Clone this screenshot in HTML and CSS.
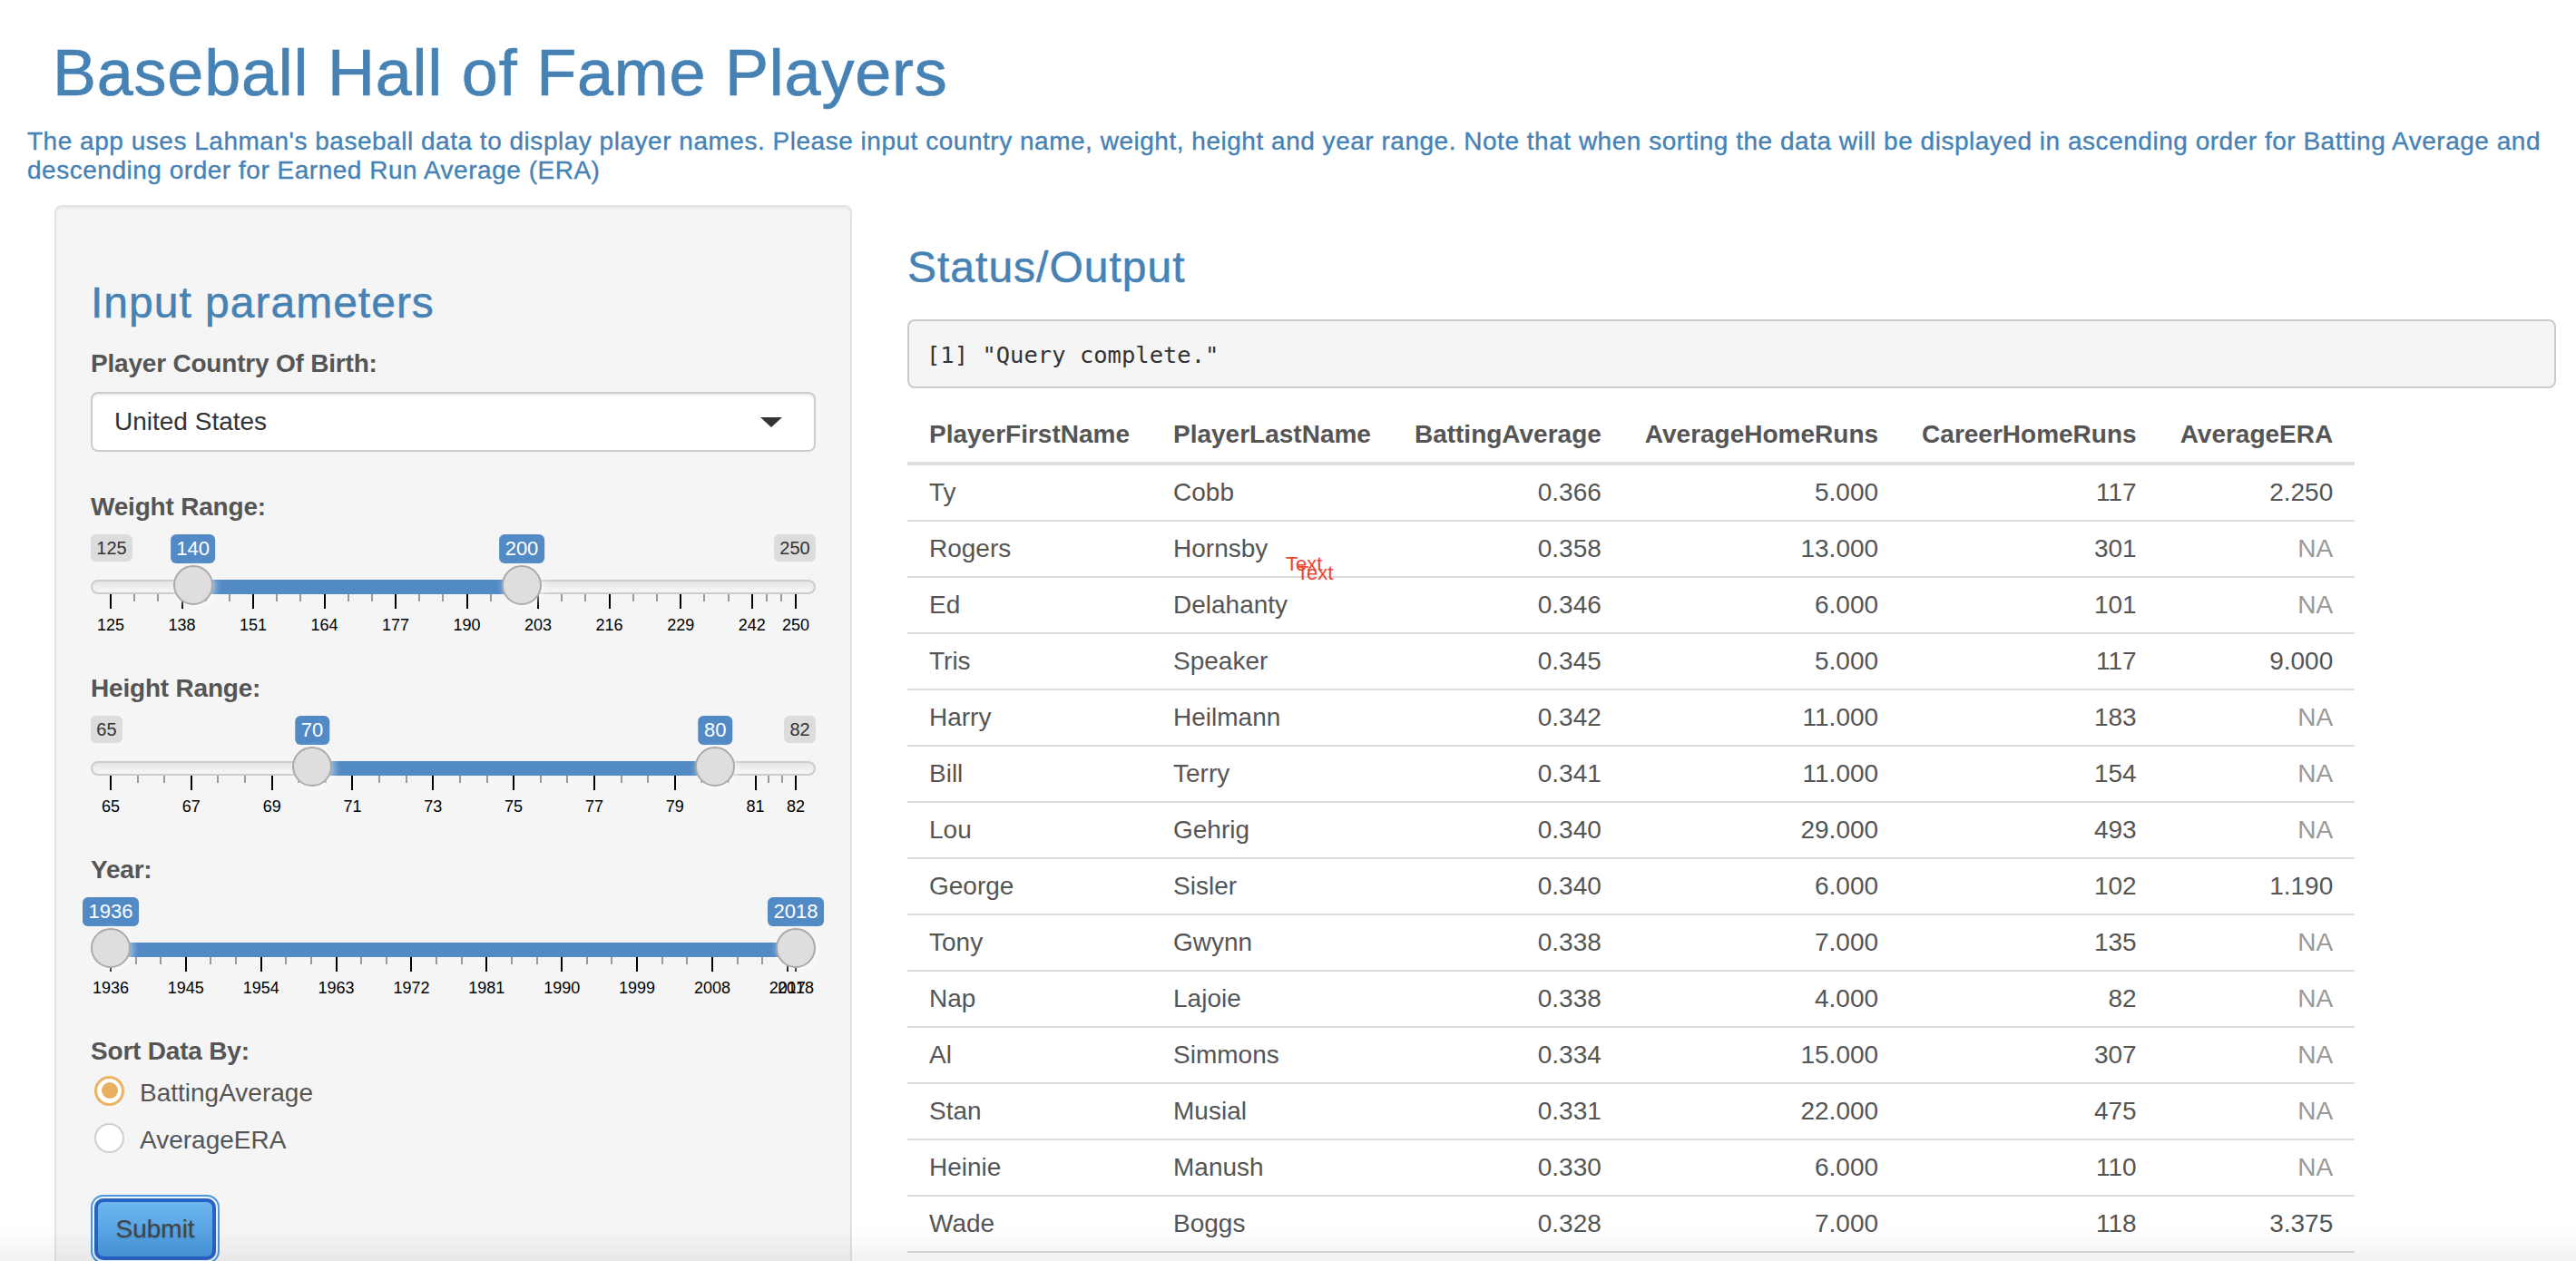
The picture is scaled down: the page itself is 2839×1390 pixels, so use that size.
FILE: index.html
```html
<!DOCTYPE html>
<html lang="en">
<head>
<meta charset="utf-8">
<title>Baseball Hall of Fame Players</title>
<link rel="stylesheet" href="styles.css">
</head>
<body>
<div class="page">
  <h1 class="app-title">Baseball Hall of Fame Players</h1>
  <h5 class="app-desc">The app uses Lahman's baseball data to display player names. Please input country name, weight, height and year range. Note that when sorting the data will be displayed in ascending order for Batting Average and<br>descending order for Earned Run Average (ERA)</h5>

  <div class="layout">
    <aside class="well">
      <h3 class="panel-heading">Input parameters</h3>

      <div class="form-group select-group">
        <label class="control-label">Player Country Of Birth:</label>
        <div class="select"><span class="select-value">United States</span><span class="caret"></span></div>
      </div>

      <div class="form-group">
        <label class="control-label">Weight Range:</label>
        <div class="irs">
          <span class="irs-min">125</span>
          <span class="irs-max">250</span>
          <div class="irs-line"></div>
          <div class="irs-inner">
            <div class="irs-bar" style="left:12%;width:48%"></div>
            <i class="tick" style="left:0%"></i><i class="tick sm" style="left:3.467%"></i><i class="tick sm" style="left:6.933%"></i>
            <i class="tick" style="left:10.4%"></i><i class="tick sm" style="left:13.867%"></i><i class="tick sm" style="left:17.333%"></i>
            <i class="tick" style="left:20.8%"></i><i class="tick sm" style="left:24.267%"></i><i class="tick sm" style="left:27.733%"></i>
            <i class="tick" style="left:31.2%"></i><i class="tick sm" style="left:34.667%"></i><i class="tick sm" style="left:38.133%"></i>
            <i class="tick" style="left:41.6%"></i><i class="tick sm" style="left:45.067%"></i><i class="tick sm" style="left:48.533%"></i>
            <i class="tick" style="left:52%"></i><i class="tick sm" style="left:55.467%"></i><i class="tick sm" style="left:58.933%"></i>
            <i class="tick" style="left:62.4%"></i><i class="tick sm" style="left:65.867%"></i><i class="tick sm" style="left:69.333%"></i>
            <i class="tick" style="left:72.8%"></i><i class="tick sm" style="left:76.267%"></i><i class="tick sm" style="left:79.733%"></i>
            <i class="tick" style="left:83.2%"></i><i class="tick sm" style="left:86.667%"></i><i class="tick sm" style="left:90.133%"></i>
            <i class="tick" style="left:93.6%"></i><i class="tick sm" style="left:95.733%"></i><i class="tick sm" style="left:97.867%"></i>
            <i class="tick" style="left:100%"></i>
            <span class="gt" style="left:0%">125</span>
            <span class="gt" style="left:10.4%">138</span>
            <span class="gt" style="left:20.8%">151</span>
            <span class="gt" style="left:31.2%">164</span>
            <span class="gt" style="left:41.6%">177</span>
            <span class="gt" style="left:52%">190</span>
            <span class="gt" style="left:62.4%">203</span>
            <span class="gt" style="left:72.8%">216</span>
            <span class="gt" style="left:83.2%">229</span>
            <span class="gt" style="left:93.6%">242</span>
            <span class="gt" style="left:100%">250</span>
            <span class="irs-label" style="left:12%">140</span>
            <span class="irs-label" style="left:60%">200</span>
            <span class="irs-handle" style="left:12%"></span>
            <span class="irs-handle" style="left:60%"></span>
          </div>
        </div>
      </div>

      <div class="form-group">
        <label class="control-label">Height Range:</label>
        <div class="irs">
          <span class="irs-min">65</span>
          <span class="irs-max">82</span>
          <div class="irs-line"></div>
          <div class="irs-inner">
            <div class="irs-bar" style="left:29.412%;width:58.823%"></div>
            <i class="tick" style="left:0%"></i><i class="tick sm" style="left:3.922%"></i><i class="tick sm" style="left:7.843%"></i>
            <i class="tick" style="left:11.765%"></i><i class="tick sm" style="left:15.686%"></i><i class="tick sm" style="left:19.608%"></i>
            <i class="tick" style="left:23.529%"></i><i class="tick sm" style="left:27.451%"></i><i class="tick sm" style="left:31.373%"></i>
            <i class="tick" style="left:35.294%"></i><i class="tick sm" style="left:39.216%"></i><i class="tick sm" style="left:43.137%"></i>
            <i class="tick" style="left:47.059%"></i><i class="tick sm" style="left:50.98%"></i><i class="tick sm" style="left:54.902%"></i>
            <i class="tick" style="left:58.824%"></i><i class="tick sm" style="left:62.745%"></i><i class="tick sm" style="left:66.667%"></i>
            <i class="tick" style="left:70.588%"></i><i class="tick sm" style="left:74.51%"></i><i class="tick sm" style="left:78.431%"></i>
            <i class="tick" style="left:82.353%"></i><i class="tick sm" style="left:86.275%"></i><i class="tick sm" style="left:90.196%"></i>
            <i class="tick" style="left:94.118%"></i><i class="tick sm" style="left:96.078%"></i><i class="tick sm" style="left:98.039%"></i>
            <i class="tick" style="left:100%"></i>
            <span class="gt" style="left:0%">65</span>
            <span class="gt" style="left:11.765%">67</span>
            <span class="gt" style="left:23.529%">69</span>
            <span class="gt" style="left:35.294%">71</span>
            <span class="gt" style="left:47.059%">73</span>
            <span class="gt" style="left:58.824%">75</span>
            <span class="gt" style="left:70.588%">77</span>
            <span class="gt" style="left:82.353%">79</span>
            <span class="gt" style="left:94.118%">81</span>
            <span class="gt" style="left:100%">82</span>
            <span class="irs-label" style="left:29.412%">70</span>
            <span class="irs-label" style="left:88.235%">80</span>
            <span class="irs-handle" style="left:29.412%"></span>
            <span class="irs-handle" style="left:88.235%"></span>
          </div>
        </div>
      </div>

      <div class="form-group">
        <label class="control-label">Year:</label>
        <div class="irs">
          <div class="irs-line"></div>
          <div class="irs-inner">
            <div class="irs-bar" style="left:0%;width:100%"></div>
            <i class="tick" style="left:0%"></i><i class="tick sm" style="left:3.659%"></i><i class="tick sm" style="left:7.317%"></i>
            <i class="tick" style="left:10.976%"></i><i class="tick sm" style="left:14.634%"></i><i class="tick sm" style="left:18.293%"></i>
            <i class="tick" style="left:21.951%"></i><i class="tick sm" style="left:25.61%"></i><i class="tick sm" style="left:29.268%"></i>
            <i class="tick" style="left:32.927%"></i><i class="tick sm" style="left:36.585%"></i><i class="tick sm" style="left:40.244%"></i>
            <i class="tick" style="left:43.902%"></i><i class="tick sm" style="left:47.561%"></i><i class="tick sm" style="left:51.22%"></i>
            <i class="tick" style="left:54.878%"></i><i class="tick sm" style="left:58.537%"></i><i class="tick sm" style="left:62.195%"></i>
            <i class="tick" style="left:65.854%"></i><i class="tick sm" style="left:69.512%"></i><i class="tick sm" style="left:73.171%"></i>
            <i class="tick" style="left:76.829%"></i><i class="tick sm" style="left:80.488%"></i><i class="tick sm" style="left:84.146%"></i>
            <i class="tick" style="left:87.805%"></i><i class="tick sm" style="left:91.463%"></i><i class="tick sm" style="left:95.122%"></i>
            <i class="tick" style="left:98.78%"></i><i class="tick sm" style="left:99.187%"></i><i class="tick sm" style="left:99.593%"></i>
            <i class="tick" style="left:100%"></i>
            <span class="gt" style="left:0%">1936</span>
            <span class="gt" style="left:10.976%">1945</span>
            <span class="gt" style="left:21.951%">1954</span>
            <span class="gt" style="left:32.927%">1963</span>
            <span class="gt" style="left:43.902%">1972</span>
            <span class="gt" style="left:54.878%">1981</span>
            <span class="gt" style="left:65.854%">1990</span>
            <span class="gt" style="left:76.829%">1999</span>
            <span class="gt" style="left:87.805%">2008</span>
            <span class="gt" style="left:98.78%">2017</span>
            <span class="gt" style="left:100%">2018</span>
            <span class="irs-label" style="left:0%">1936</span>
            <span class="irs-label" style="left:100%">2018</span>
            <span class="irs-handle" style="left:0%"></span>
            <span class="irs-handle" style="left:100%"></span>
          </div>
        </div>
      </div>

      <div class="form-group radio-group">
        <label class="control-label">Sort Data By:</label>
        <div class="radio is-checked"><span class="radio-dot"></span><span class="radio-text">BattingAverage</span></div>
        <div class="radio"><span class="radio-dot"></span><span class="radio-text">AverageERA</span></div>
      </div>

      <button class="btn-submit" type="button">Submit</button>
    </aside>

    <main class="main">
      <h3 class="panel-heading">Status/Output</h3>
      <pre class="status">[1] "Query complete."</pre>
      <table class="results">
        <thead>
          <tr><th>PlayerFirstName</th><th>PlayerLastName</th><th class="num">BattingAverage</th><th class="num">AverageHomeRuns</th><th class="num">CareerHomeRuns</th><th class="num">AverageERA</th></tr>
        </thead>
        <tbody>
          <tr><td>Ty</td><td>Cobb</td><td class="num">0.366</td><td class="num">5.000</td><td class="num">117</td><td class="num">2.250</td></tr>
          <tr><td>Rogers</td><td>Hornsby</td><td class="num">0.358</td><td class="num">13.000</td><td class="num">301</td><td class="num na">NA</td></tr>
          <tr><td>Ed</td><td>Delahanty</td><td class="num">0.346</td><td class="num">6.000</td><td class="num">101</td><td class="num na">NA</td></tr>
          <tr><td>Tris</td><td>Speaker</td><td class="num">0.345</td><td class="num">5.000</td><td class="num">117</td><td class="num">9.000</td></tr>
          <tr><td>Harry</td><td>Heilmann</td><td class="num">0.342</td><td class="num">11.000</td><td class="num">183</td><td class="num na">NA</td></tr>
          <tr><td>Bill</td><td>Terry</td><td class="num">0.341</td><td class="num">11.000</td><td class="num">154</td><td class="num na">NA</td></tr>
          <tr><td>Lou</td><td>Gehrig</td><td class="num">0.340</td><td class="num">29.000</td><td class="num">493</td><td class="num na">NA</td></tr>
          <tr><td>George</td><td>Sisler</td><td class="num">0.340</td><td class="num">6.000</td><td class="num">102</td><td class="num">1.190</td></tr>
          <tr><td>Tony</td><td>Gwynn</td><td class="num">0.338</td><td class="num">7.000</td><td class="num">135</td><td class="num na">NA</td></tr>
          <tr><td>Nap</td><td>Lajoie</td><td class="num">0.338</td><td class="num">4.000</td><td class="num">82</td><td class="num na">NA</td></tr>
          <tr><td>Al</td><td>Simmons</td><td class="num">0.334</td><td class="num">15.000</td><td class="num">307</td><td class="num na">NA</td></tr>
          <tr><td>Stan</td><td>Musial</td><td class="num">0.331</td><td class="num">22.000</td><td class="num">475</td><td class="num na">NA</td></tr>
          <tr><td>Heinie</td><td>Manush</td><td class="num">0.330</td><td class="num">6.000</td><td class="num">110</td><td class="num na">NA</td></tr>
          <tr><td>Wade</td><td>Boggs</td><td class="num">0.328</td><td class="num">7.000</td><td class="num">118</td><td class="num">3.375</td></tr>
        </tbody>
      </table>
      <span class="stray stray-a">Text</span>
      <span class="stray stray-b">Text</span>
    </main>
  </div>
</div>
<div class="bottom-fade"></div>
</body>
</html>
```

FILE: styles.css
```css
html {
  overflow: hidden;
}

body {
  margin: 0;
  background: #fff;
  color: #555;
  font-family: "Liberation Sans", Arial, Helvetica, sans-serif;
  font-size: 28px;
  line-height: 40px;
}

.page {
  padding: 0 22px 0 30px;
}

.app-title {
  margin: 40px 0 20px 28px;
  font-size: 72px;
  line-height: 80px;
  font-weight: normal;
  letter-spacing: 0.76px;
  color: #4682b4;
  -webkit-text-stroke: 0.7px #4682b4;
}

.app-desc {
  margin: 0 0 22px;
  font-size: 28px;
  line-height: 32px;
  font-weight: normal;
  letter-spacing: 0.52px;
  white-space: nowrap;
  color: #4682b4;
  -webkit-text-stroke: 0.35px #4682b4;
}

.layout {
  display: flex;
  align-items: flex-start;
  gap: 61px;
  padding-left: 30px;
}

/* ---------- sidebar ---------- */
.well {
  flex: none;
  width: 879px;
  box-sizing: border-box;
  padding: 38px 38px 60px;
  background: #f5f5f5;
  border: 2px solid #e3e3e3;
  border-radius: 8px;
  box-shadow: inset 0 2px 2px rgba(0, 0, 0, 0.05);
}

.panel-heading {
  margin: 41px 0 21px;
  font-size: 48px;
  line-height: 53px;
  font-weight: normal;
  letter-spacing: 1px;
  color: #4682b4;
  -webkit-text-stroke: 0.5px #4682b4;
}

.form-group {
  margin-bottom: 30px;
}

.select-group {
  margin-bottom: 41px;
}

.control-label {
  display: block;
  font-weight: bold;
  line-height: 40px;
  letter-spacing: -0.2px;
  color: #555;
}

.select {
  margin-top: 11px;
  height: 66px;
  box-sizing: border-box;
  display: flex;
  align-items: center;
  justify-content: space-between;
  padding: 0 35px 0 24px;
  background: #fff;
  border: 2px solid #cccccc;
  border-radius: 8px;
  box-shadow: inset 0 2px 2px rgba(0, 0, 0, 0.075);
  color: #333;
}

.caret {
  width: 0;
  height: 0;
  border-left: 12px solid transparent;
  border-right: 12px solid transparent;
  border-top: 11px solid #333;
}

/* ---------- range slider ---------- */
.irs {
  position: relative;
  margin-top: 10px;
  height: 120px;
}

.irs-min,
.irs-max {
  position: absolute;
  top: 0;
  height: 30px;
  padding: 0 6.3px;
  font-size: 20px;
  line-height: 30px;
  color: #333;
  background: rgba(0, 0, 0, 0.1);
  border-radius: 6px;
}

.irs-min {
  left: 0;
}

.irs-max {
  right: 0;
}

.irs-line {
  position: absolute;
  top: 50px;
  left: 0;
  right: 0;
  height: 16px;
  box-sizing: border-box;
  border: 2px solid #cccccc;
  border-radius: 16px;
  background: linear-gradient(to bottom, #dddddd -50%, #ffffff 150%);
}

.irs-inner {
  position: absolute;
  top: 0;
  bottom: 0;
  left: 22px;
  right: 22px;
}

.irs-bar {
  position: absolute;
  top: 50px;
  height: 16px;
  background: #528ac6;
}

.tick {
  position: absolute;
  top: 66px;
  width: 2px;
  height: 16px;
  margin-left: -1px;
  background: #000;
}

.tick.sm {
  height: 8px;
  background: #9a9a9a;
}

.gt {
  position: absolute;
  top: 91px;
  font-size: 18px;
  line-height: 18px;
  color: #000;
  transform: translateX(-50%);
  white-space: nowrap;
}

.irs-label {
  position: absolute;
  top: 0;
  height: 32px;
  padding: 0 6.5px;
  font-size: 22px;
  line-height: 32px;
  color: #fff;
  background: #528ac6;
  border-radius: 6px;
  transform: translateX(-50%);
  white-space: nowrap;
}

.irs-handle {
  position: absolute;
  top: 34px;
  width: 44px;
  height: 44px;
  box-sizing: border-box;
  border: 2px solid #aaaaaa;
  border-radius: 50%;
  background: #dedede;
  box-shadow: 2px 2px 8px rgba(255, 255, 255, 0.6);
  transform: translateX(-50%);
}

/* ---------- radios ---------- */
.radio {
  display: flex;
  align-items: center;
  height: 40px;
  margin-top: 12px;
}

.radio-group .control-label + .radio {
  margin-top: 6px;
}

.radio-dot {
  flex: none;
  width: 33px;
  height: 33px;
  box-sizing: border-box;
  margin: -6px 17px 0 4px;
  border: 2px solid #cfcfcf;
  border-radius: 50%;
  background: #fff;
  display: flex;
  align-items: center;
  justify-content: center;
}

.radio.is-checked .radio-dot {
  border: 3px solid #ecb363;
}

.radio.is-checked .radio-dot::after {
  content: "";
  width: 18px;
  height: 18px;
  border-radius: 50%;
  background: #e9af5e;
}

.radio-text {
  color: #555;
}

.btn-submit {
  display: inline-block;
  margin: 14px 0 0 4px;
  padding: 10px 19.5px;
  font-family: inherit;
  font-size: 28px;
  line-height: 40px;
  color: #444;
  text-shadow: 0 1px 2px rgba(0, 0, 0, 0.25);
  border: 4px solid #2763c7;
  border-radius: 10px;
  background: linear-gradient(to bottom, #6db6ee, #4696dc);
  box-shadow: 0 0 0 2px #eef4fb, 0 0 0 4px #4b98e0;
}

/* ---------- main panel ---------- */
.main {
  position: relative;
  flex: 1;
  min-width: 0;
}

.main .panel-heading {
  margin: 42px 0 31px;
}

.status {
  margin: 0 0 21px;
  padding: 19.5px 19px 17.5px;
  font-family: "DejaVu Sans Mono", "Liberation Mono", monospace;
  font-size: 25.5px;
  line-height: 35px;
  color: #333;
  background: #f5f5f5;
  border: 2px solid #cccccc;
  border-radius: 8px;
}

.results {
  border-collapse: separate;
  border-spacing: 0;
}

.results th,
.results td {
  padding: 10px 24px;
  line-height: 40px;
  text-align: left;
  white-space: nowrap;
}

.results th {
  font-weight: bold;
  border-bottom: 4px solid #dddddd;
}

.results td {
  border-bottom: 2px solid #dddddd;
}

.results .num {
  text-align: right;
}

.results .na {
  color: #999;
}

.stray {
  position: absolute;
  font-size: 22px;
  line-height: 22px;
  color: #ec4534;
}

.stray-a {
  left: 417px;
  top: 385px;
}

.stray-b {
  left: 429px;
  top: 395px;
}

.bottom-fade {
  position: fixed;
  left: 0;
  right: 0;
  bottom: 0;
  height: 36px;
  background: linear-gradient(to bottom, rgba(0, 0, 0, 0), rgba(0, 0, 0, 0.05));
  pointer-events: none;
}
```
